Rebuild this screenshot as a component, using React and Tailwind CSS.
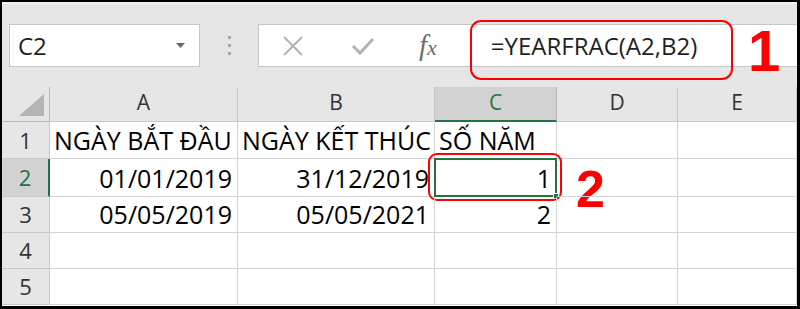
import React from "react";

const font = { fontFamily: '"Open Sans", "Noto Sans", sans-serif' };

function Toolbar() {
  return (
    <div className="relative flex h-[85px] items-start border-t-2 border-[#f2f2f2] bg-[#e6e6e6] pt-[20px] pl-[7px]">
      <div className="flex h-[43px] w-[191px] items-center justify-between border border-[#c6c6c6] bg-white pl-[8px] pr-[14px]">
        <span className="text-[24px] text-[#1f1f1f]">C2</span>
        <svg width="9" height="5" viewBox="0 0 9 5">
          <path d="M0 0 L9 0 L4.5 5 Z" fill="#6a6a6a" />
        </svg>
      </div>
      <div className="flex h-[43px] w-[58px] flex-col items-center justify-center gap-[5px]">
        <div className="h-[3px] w-[3px] bg-[#a6a6a6]" />
        <div className="h-[3px] w-[3px] bg-[#a6a6a6]" />
        <div className="h-[3px] w-[3px] bg-[#a6a6a6]" />
      </div>
      <div className="flex h-[43px] flex-1 items-center border-y border-l border-[#c6c6c6] bg-white">
        <div className="ml-[22px] flex w-[24px] justify-center">
          <svg width="22" height="22" viewBox="0 0 22 22">
            <path d="M2 2 L20 20 M20 2 L2 20" stroke="#b3b3b3" strokeWidth="2" fill="none" />
          </svg>
        </div>
        <div className="ml-[46px] flex w-[24px] justify-center">
          <svg width="24" height="20" viewBox="0 0 24 20">
            <path d="M2 10 L9 17 L22 3" stroke="#b3b3b3" strokeWidth="3" fill="none" />
          </svg>
        </div>
        <span
          className="ml-[44px] text-[29px] italic leading-none text-[#6e6e6e]"
          style={{ fontFamily: '"Liberation Serif", serif' }}
        >
          f<span className="text-[22px]">x</span>
        </span>
        <span className="ml-[54px] text-[24px] text-[#1f1f1f]">=YEARFRAC(A2,B2)</span>
      </div>
      <div className="pointer-events-none absolute left-[468px] top-[16px] h-[60px] w-[263px] rounded-[11px] border-2 border-[#ff0000]" />
      <span
        className="absolute left-[746px] top-[18px] text-[58px] font-bold leading-none text-[#ff0000]"
        style={{ fontFamily: '"Liberation Sans", Arial, sans-serif' }}
      >
        1
      </span>
    </div>
  );
}

const cols = ["A", "B", "C", "D", "E"];
const rows = [
  ["NGÀY BẮT ĐẦU", "NGÀY KẾT THÚC", "SỐ NĂM", "", ""],
  ["01/01/2019", "31/12/2019", "1", "", ""],
  ["05/05/2019", "05/05/2021", "2", "", ""],
  ["", "", "", "", ""],
  ["", "", "", "", ""],
];

function Sheet() {
  return (
    <div className="grid flex-1 grid-cols-[48px_188px_197px_122px_121px_1fr] grid-rows-[35px_37px_38px_36px_36px_36px] bg-white text-black">
      <div className="relative border-r border-b border-[#b8b8b8] bg-[#e6e6e6]">
        <svg className="absolute right-[5px] bottom-[5px]" width="25" height="22" viewBox="0 0 25 22">
          <path d="M25 0 L25 22 L0 22 Z" fill="#b4b4b4" />
        </svg>
      </div>
      {cols.map((c) => (
        <div
          key={c}
          className={
            c === "C"
              ? "flex items-end justify-center border-r border-b-2 border-r-[#b8b8b8] border-b-[#217346] bg-[#d2d2d2] pb-[2px] text-[21px] text-[#217346]"
              : "flex items-end justify-center border-r border-b border-[#c8c8c8] bg-[#e6e6e6] pb-[3px] text-[21px] text-[#333]"
          }
        >
          {c}
        </div>
      ))}
      {rows.map((r, i) => (
        <React.Fragment key={i}>
          <div
            className={
              i === 1
                ? "flex items-center justify-center border-r-2 border-b border-r-[#217346] border-b-[#c8c8c8] bg-[#d2d2d2] text-[22px] text-[#217346]"
                : "flex items-center justify-center border-r border-b border-[#c8c8c8] bg-[#e6e6e6] text-[22px] text-[#333]"
            }
          >
            {i + 1}
          </div>
          {r.map((v, j) => {
            const numeric = i > 0 && v !== "";
            const selected = i === 1 && j === 2;
            return (
              <div
                key={j}
                className={
                  "relative flex items-end overflow-visible whitespace-nowrap border-r border-b border-[#d4d4d4] pb-[2px] text-[25px] leading-[32px] " +
                  (numeric ? "justify-end pr-[5px]" : "justify-start pl-[4px]")
                }
              >
                {v}
                {selected && (
                  <>
                    <div className="absolute -left-[1px] -top-[1px] -right-[1px] -bottom-[1px] border-2 border-[#217346]" />
                    <div className="absolute -right-[3px] -bottom-[3px] h-[6px] w-[6px] border border-white bg-[#217346]" />
                    <div className="absolute -left-[7px] -top-[6px] -right-[6px] -bottom-[5px] rounded-[9px] border-2 border-[#ff0000]" />
                    <span
                      className="absolute left-[141px] top-[4px] text-[52px] font-bold leading-none text-[#ff0000]"
                      style={{ fontFamily: '"Liberation Sans", Arial, sans-serif' }}
                    >
                      2
                    </span>
                  </>
                )}
              </div>
            );
          })}
        </React.Fragment>
      ))}
    </div>
  );
}

export default function App() {
  return (
    <div
      className="flex h-[309px] w-[800px] flex-col overflow-hidden border-t-[2px] border-l-[2px] border-r-[3px] border-b-[3px] border-black bg-white"
      style={font}
    >
      <Toolbar />
      <Sheet />
    </div>
  );
}
